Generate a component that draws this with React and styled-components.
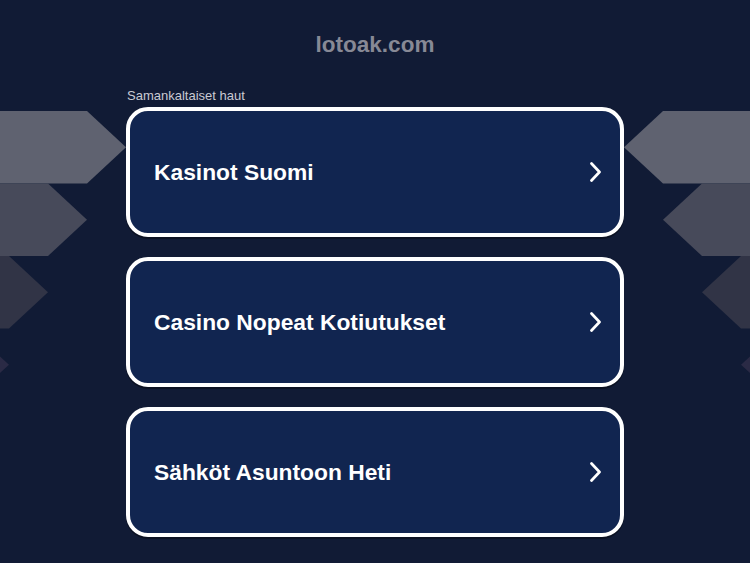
import React from 'react';
import styled, { createGlobalStyle } from 'styled-components';

const GlobalStyle = createGlobalStyle`
  html, body {
    margin: 0;
    padding: 0;
    background: #111b35;
  }
  body {
    font-family: "Liberation Sans", Arial, sans-serif;
  }
`;

const searches = [
  'Kasinot Suomi',
  'Casino Nopeat Kotiutukset',
  'Sähköt Asuntoon Heti',
];

// arrow shapes: left edge point faces the cards
const shapeColors = ['#5f6270', '#474a5a', '#313446', '#2a2a45'];

const Decor = ({ side }) => (
  <DecorSvg side={side} width="130" height="300" viewBox="0 0 130 300">
    {shapeColors.map((c, i) => {
      const top = i * 72.5;
      const tip = 126 - 39 * i;
      const base = tip - 39;
      return (
        <polygon
          key={i}
          fill={c}
          points={`-200,${top} ${base},${top} ${tip},${top + 36.25} ${base},${top + 72.5} -200,${top + 72.5}`}
        />
      );
    })}
  </DecorSvg>
);

const Chevron = () => (
  <svg width="14" height="20" viewBox="0 0 14 20">
    <polyline points="3.5,1.5 11.5,10 3.5,18.5" fill="none" stroke="#fff" strokeWidth="2.7" strokeLinecap="round" strokeLinejoin="round" />
  </svg>
);

const App = () => {
  return (
    <Page>
      <GlobalStyle />
      <Decor side="left" />
      <Decor side="right" />
      <Domain>lotoak.com</Domain>
      <Column>
        <Label>Samankaltaiset haut</Label>
        <List>
          {searches.map((s, i) => (
            <Card key={i} href="#">
              <span>{s}</span>
              <Chevron />
            </Card>
          ))}
        </List>
      </Column>
    </Page>
  );
};

export default App;

const Page = styled.div`
  position: relative;
  min-height: 563px;
  overflow: hidden;
  background: #111b35;
`;

const DecorSvg = styled.svg`
  position: absolute;
  top: 111px;
  ${p => p.side === 'left' ? 'left: 0;' : 'right: 0; transform: scaleX(-1);'}
  overflow: visible;
  z-index: 0;
`;

const Domain = styled.h1`
  margin: 0;
  padding-top: 32px;
  font-size: 22.5px;
  line-height: 26px;
  font-weight: 700;
  color: #878995;
  text-align: center;
`;

const Column = styled.div`
  position: relative;
  z-index: 1;
  width: 498px;
  margin: 30px auto 0;
`;

const Label = styled.div`
  font-size: 13px;
  line-height: 15px;
  color: #c9cad3;
  padding-left: 1px;
  margin-bottom: 4px;
`;

const List = styled.div`
  display: flex;
  flex-direction: column;
  gap: 20px;
`;

const Card = styled.a`
  box-sizing: border-box;
  height: 130px;
  display: flex;
  align-items: center;
  justify-content: space-between;
  padding: 0 18px 0 24px;
  border: 4px solid #fff;
  border-radius: 22px;
  background: #112550;
  color: #fff;
  text-decoration: none;
  font-size: 22.8px;
  font-weight: 700;
  box-shadow: 0 2px 0 rgba(0, 0, 0, 0.35);
`;
